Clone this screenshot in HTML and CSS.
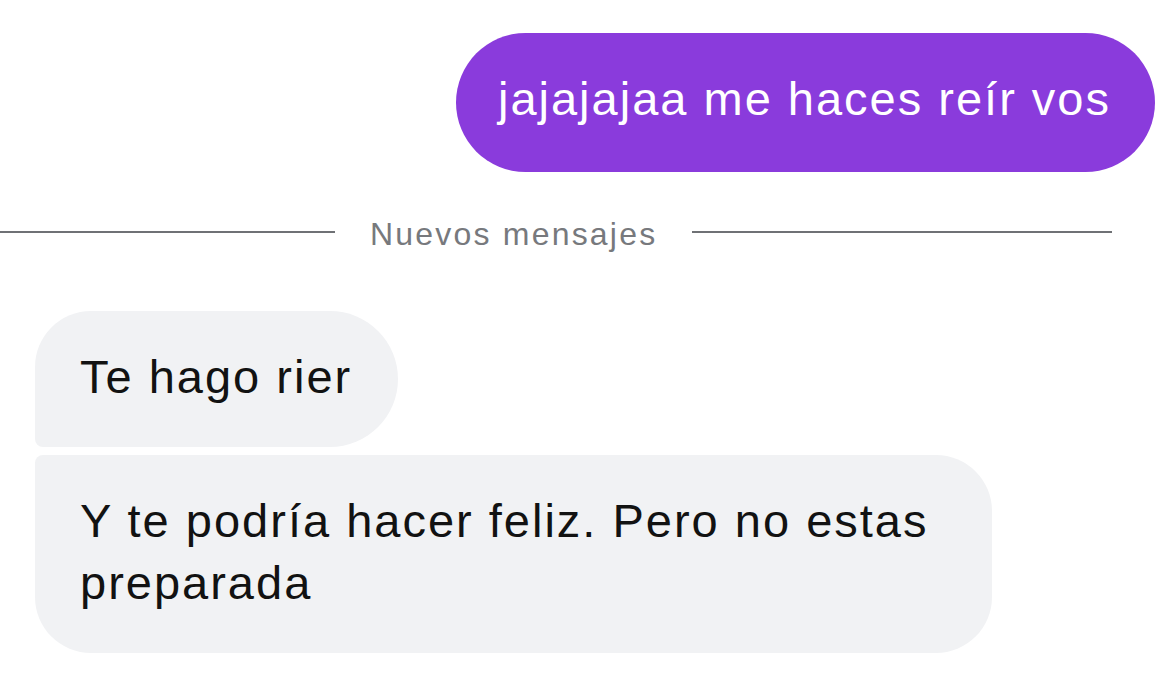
FILE: index.html
```html
<!DOCTYPE html>
<html lang="es">
<head>
    <meta charset="UTF-8">
    <meta name="viewport" content="width=device-width, initial-scale=1.0">
    <title>Chat</title>
    <link rel="stylesheet" href="styles.css">
</head>
<body>
    <div class="chat">
        <div class="row row-out">
            <div class="bubble bubble-out">jajajajaa me haces reír vos</div>
        </div>

        <div class="divider">
            <span class="divider-line left"></span>
            <span class="divider-text">Nuevos mensajes</span>
            <span class="divider-line right"></span>
        </div>

        <div class="group-in">
            <div class="bubble bubble-in first">Te hago rier</div>
            <div class="bubble bubble-in last">Y te podría hacer feliz. Pero no estas<br>preparada</div>
        </div>
    </div>
</body>
</html>
```

FILE: styles.css
```css
body {
    margin: 0;
    padding: 0;
    background: #fff;
    font-family: "Liberation Sans", Arial, sans-serif;
}

.chat {
    display: flex;
    flex-direction: column;
    padding: 33px 15px 0 35px;
}

.row-out {
    display: flex;
    justify-content: flex-end;
}

.bubble {
    font-size: 47px;
    line-height: 57px;
    letter-spacing: 2px;
    color: #121212;
    box-sizing: border-box;
    white-space: nowrap;
}

.bubble-out {
    background: #8a3bdc;
    color: #fff;
    height: 139px;
    padding: 37px 44px 0 42px;
    border-radius: 70px;
}

.divider {
    display: flex;
    align-items: center;
    margin: 46px 43px 0 -35px;
    height: 28px;
}

.divider-line {
    height: 2px;
    background: #6f7175;
}

.divider-line.left {
    width: 335px;
}

.divider-line.right {
    flex: 1;
}

.divider-text {
    font-size: 32px;
    letter-spacing: 2.2px;
    color: #77797d;
    padding: 4px 35px 0;
}

.group-in {
    display: flex;
    flex-direction: column;
    align-items: flex-start;
    gap: 8px;
    margin-top: 65px;
}

.bubble-in {
    background: #f1f2f4;
}

.bubble-in.first {
    height: 136px;
    padding: 37px 46px 0 45px;
    border-radius: 56px 68px 68px 8px;
}

.bubble-in.last {
    width: 957px;
    height: 198px;
    line-height: 62px;
    padding: 35px 45px 0 45px;
    border-radius: 8px 56px 56px 56px;
}
```
